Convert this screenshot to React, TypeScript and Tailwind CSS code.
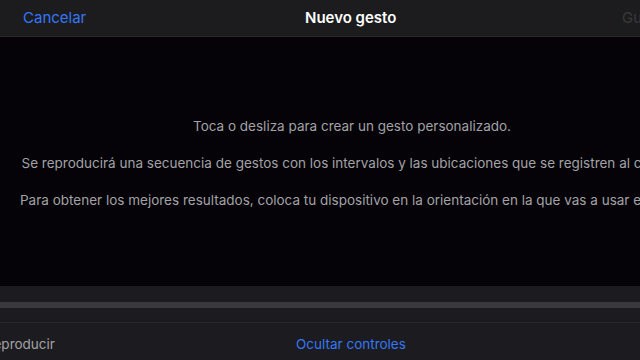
export default function App() {
    const font = { fontFamily: "Inter, 'Noto Sans', sans-serif" };

    return (
        <div className="w-[640px] h-[360px] overflow-hidden flex flex-col bg-[#050307]" style={font}>
            {/* Header */}
            <div className="h-[37px] shrink-0 bg-[#1c1c1e] border-b border-[#2a2a2d] flex items-center relative">
                <span className="ml-[23px] text-[15px] text-[#3478f6]">Cancelar</span>
                <span className="absolute left-[305px] text-[15px] font-semibold text-white">Nuevo gesto</span>
                <span className="absolute left-[622px] text-[15px] text-[#3a3a3d] whitespace-nowrap">Guardar</span>
            </div>

            {/* Canvas */}
            <div className="flex-1 overflow-hidden pt-[80px]">
                <div className="ml-[20px] w-[664px] text-center text-[13.5px] text-[#a2a2a6] flex flex-col gap-[19px]">
                    <p className="whitespace-nowrap leading-[18px]">Toca o desliza para crear un gesto personalizado.</p>
                    <p className="whitespace-nowrap leading-[18px]">Se reproducirá una secuencia de gestos con los intervalos y las ubicaciones que se registren al crearlo.</p>
                    <p className="whitespace-nowrap leading-[18px]">Para obtener los mejores resultados, coloca tu dispositivo en la orientación en la que vas a usar el gesto.</p>
                </div>
            </div>

            {/* Controls */}
            <div className="h-[74px] shrink-0 bg-[#1c1b1f] flex flex-col">
                <div className="h-[16px]" />
                <div className="h-[6px] bg-[#3a393e]" />
                <div className="h-[14px]" />
                <div className="h-px bg-[#28272b]" />
                <div className="flex-1 flex items-center pt-[5px] relative overflow-hidden">
                    <span className="ml-[-15px] text-[13.5px] text-[#a2a2a6]">Reproducir</span>
                    <span className="absolute left-[296px] text-[13.5px] text-[#3478f6]">Ocultar controles</span>
                </div>
            </div>
        </div>
    );
}
